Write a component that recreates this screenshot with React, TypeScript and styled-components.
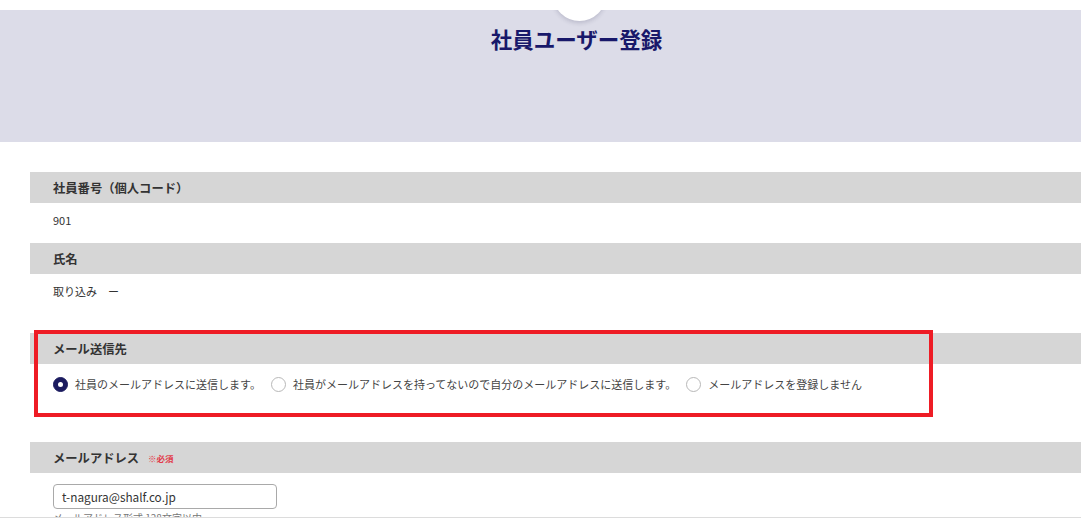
import React from 'react';
import styled, { createGlobalStyle } from 'styled-components';

const GlobalStyle = createGlobalStyle`
  body {
    margin: 0;
    background: #fff;
    font-family: "Noto Sans CJK JP", "Noto Sans", sans-serif;
    color: #333;
  }
`;

const Page = styled.div`
  padding-top: 10px;
`;

const Hero = styled.div`
  position: relative;
  height: 132px;
  background: #dcdce8;
  overflow: hidden;
`;

const HeroInner = styled.div`
  position: relative;
  padding-left: 72px;
  text-align: center;
`;

const Notch = styled.div`
  position: absolute;
  top: -42px;
  left: calc(50% + 12px);
  width: 53px;
  height: 53px;
  border-radius: 50%;
  background: #fff;
  box-shadow: 0 2px 4px rgba(40, 40, 80, 0.18);
`;

const Title = styled.h1`
  margin: 0;
  padding-top: 14px;
  font-size: 21.5px;
  line-height: 30px;
  font-weight: 700;
  color: #18186a;
`;

const Form = styled.div`
  margin: 30px 0 0 30px;
`;

const Field = styled.section`
  position: relative;
`;

const FieldHead = styled.div`
  display: flex;
  align-items: center;
  gap: 9px;
  height: 31px;
  padding-left: 23px;
  background: #d6d6d6;
  font-size: 12.3px;
  font-weight: 700;
  color: #333;
`;

const Required = styled.span`
  font-size: 8.5px;
  font-weight: 700;
  color: #e23a4a;
`;

const FieldBody = styled.div<{ $height: number; $top: number }>`
  box-sizing: border-box;
  height: ${(p) => p.$height}px;
  padding: ${(p) => p.$top}px 0 0 23px;
  font-size: 11px;
  line-height: 18px;
  color: #333;
`;

const Gap = styled.span`
  display: inline-block;
  width: 11px;
`;

const RadioGroup = styled.div`
  display: flex;
  align-items: center;
  gap: 10px;
`;

const RadioOption = styled.label`
  display: flex;
  align-items: center;
  gap: 7px;
  font-size: 11px;
  color: #444;
  white-space: nowrap;
`;

const RadioMark = styled.span<{ $checked?: boolean }>`
  box-sizing: border-box;
  display: inline-flex;
  align-items: center;
  justify-content: center;
  width: 15px;
  height: 15px;
  border-radius: 50%;
  background: ${(p) => (p.$checked ? '#1b1b5f' : '#fff')};
  border: 1px solid ${(p) => (p.$checked ? '#1b1b5f' : '#b8b8b8')};

  &::after {
    content: '';
    display: ${(p) => (p.$checked ? 'block' : 'none')};
    width: 5px;
    height: 5px;
    border-radius: 50%;
    background: #fff;
  }
`;

const Highlight = styled.div`
  position: absolute;
  top: -3px;
  left: 4px;
  width: 899px;
  height: 87px;
  box-sizing: border-box;
  border: 4px solid #ee1c25;
  pointer-events: none;
`;

const TextInput = styled.div`
  box-sizing: border-box;
  width: 224px;
  height: 25px;
  padding-left: 8px;
  display: flex;
  align-items: center;
  border: 1px solid #a9a9a9;
  border-radius: 4px;
  font-size: 11.8px;
  color: #333;
`;

const Hint = styled.div`
  margin-top: 3px;
  font-size: 10px;
  line-height: 12px;
  color: #777;
`;

const Footer = styled.div`
  position: fixed;
  left: 0;
  right: 0;
  bottom: 0;
  height: 7px;
  background: #fff;
  border-top: 1px solid #dcdcdc;
`;

const options = [
  { label: '社員のメールアドレスに送信します。', checked: true },
  { label: '社員がメールアドレスを持ってないので自分のメールアドレスに送信します。', checked: false },
  { label: 'メールアドレスを登録しません', checked: false },
];

export default function App() {
  return (
    <Page>
      <GlobalStyle />
      <Hero>
        <HeroInner>
          <Notch />
          <Title>社員ユーザー登録</Title>
        </HeroInner>
      </Hero>

      <Form>
        <Field>
          <FieldHead>社員番号（個人コード）</FieldHead>
          <FieldBody $height={40} $top={8}>901</FieldBody>
        </Field>

        <Field>
          <FieldHead>氏名</FieldHead>
          <FieldBody $height={59} $top={8}>
            取り込み<Gap />ー
          </FieldBody>
        </Field>

        <Field>
          <FieldHead>メール送信先</FieldHead>
          <FieldBody $height={78} $top={11}>
            <RadioGroup>
              {options.map((o) => (
                <RadioOption key={o.label}>
                  <RadioMark $checked={o.checked} />
                  {o.label}
                </RadioOption>
              ))}
            </RadioGroup>
          </FieldBody>
          <Highlight />
        </Field>

        <Field>
          <FieldHead>
            メールアドレス
            <Required>※必須</Required>
          </FieldHead>
          <FieldBody $height={60} $top={11}>
            <TextInput>t-nagura@shalf.co.jp</TextInput>
            <Hint>メールアドレス形式 128文字以内</Hint>
          </FieldBody>
        </Field>
      </Form>
      <Footer />
    </Page>
  );
}
